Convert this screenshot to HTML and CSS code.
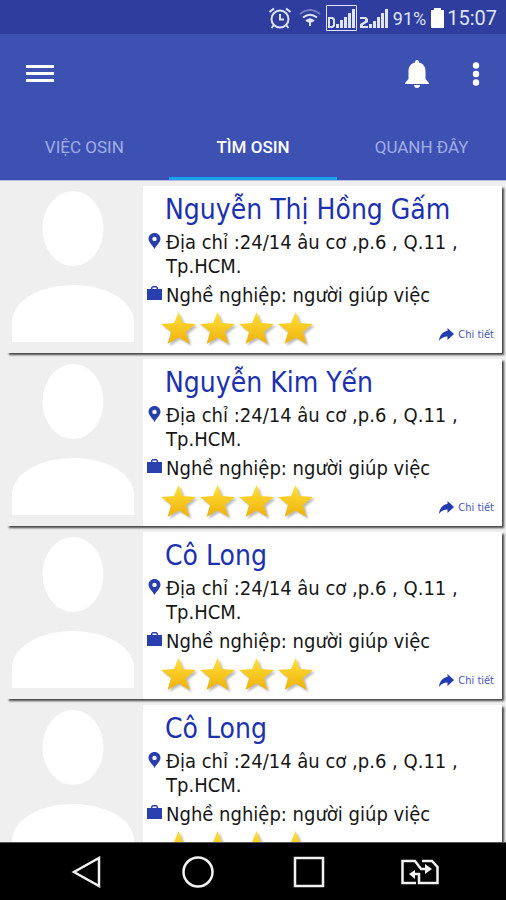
FILE: index.html
```html
<!DOCTYPE html>
<html lang="vi">
<head>
<meta charset="utf-8">
<meta name="viewport" content="width=device-width, initial-scale=1">
<title>Tìm Osin</title>
<link rel="stylesheet" href="styles.css">
</head>
<body>
<svg class="defs" aria-hidden="true">
  <defs>
    <linearGradient id="gold" x1="0" y1="0" x2="0" y2="1">
      <stop offset="0" stop-color="#ffe03a"/>
      <stop offset="1" stop-color="#efb10c"/>
    </linearGradient>
    <symbol id="avatar" viewBox="0 0 122 151">
      <ellipse cx="61" cy="37.500" rx="30.500" ry="37.500"/>
      <path d="M0 151V129C2 108 30 94 61 94S120 108 122 129V151Z"/>
    </symbol>
    <symbol id="pin" viewBox="0 0 12 16">
      <path fill-rule="evenodd" d="M6 0C2.600 0 0 2.600 0 5.800C0 9.500 4 12 6 16C8 12 12 9.500 12 5.800C12 2.600 9.400 0 6 0ZM6 3.700A2.200 2.200 0 1 1 6 8.100A2.200 2.200 0 1 1 6 3.700Z"/>
    </symbol>
    <symbol id="bag" viewBox="0 0 15 14">
      <path fill-rule="evenodd" d="M4 3V1.500L5.500 0H9.500L11 1.500V3H15V14H0V3ZM5.500 3H9.500V1.500H5.500Z"/>
    </symbol>
    <symbol id="star" viewBox="0 0 35 32">
      <path d="M17.500 0L22 11L35 12L25 20L28.500 32L17.500 25.500L6.500 32L10 20L0 12L13 11Z" fill="url(#gold)"/>
    </symbol>
    <symbol id="share" viewBox="0 0 15 13">
      <path d="M8.500 0L15 6L8.500 12V8.500C4.500 8.500 2 10 0 13C.500 7.500 3.500 3.500 8.500 3Z"/>
    </symbol>
  </defs>
</svg>

<div class="status">
  <svg width="24" height="24" viewBox="0 0 24 24" fill="none" stroke="currentColor" stroke-width="2">
    <circle cx="12" cy="13" r="8.500"/><path d="M12 8V13.500H16M1.500 6L6 2.500M22.500 6L18 2.500M5.500 19.500L3.500 22M18.500 19.500L20.500 22"/>
  </svg>
  <svg class="wifi" width="22" height="18" viewBox="0 0 22 18" fill="none" stroke="currentColor" stroke-width="2">
    <path class="faint" d="M1 5Q11-3 21 5"/><path d="M4 8.500Q11 3 18 8.500M7 12Q11 9 15 12"/><path d="M8.500 13L11 10.500L13.500 13M11 11V17"/>
  </svg>
  <svg width="31" height="26" viewBox="0 0 31 26" fill="currentColor">
    <path d="M.500.500H30.500V25.500H.500Z" fill="none" stroke="currentColor"/>
    <path fill-rule="evenodd" d="M2 12H7L9 14V21L7 23H2ZM4 14V21H6L7 20V15L6 14Z"/>
    <path d="M10 19H13V23H10ZM14 15H17V23H14ZM18 12H21V23H18ZM22 8H25V23H22ZM26 4H29V23H26Z"/>
  </svg>
  <svg width="29" height="26" viewBox="0 0 29 26" fill="currentColor">
    <path d="M0 12H6L8 14V17L3 20V21H8V23H0V19L5 16V14H0ZM9 19H12V23H9ZM13 16H16V23H13ZM17 12H20V23H17ZM21 8H24V23H21ZM25 4H28V23H25Z"/>
  </svg>
  <span class="percent">91%</span>
  <svg width="13" height="20" viewBox="0 0 13 20" fill="#fff"><path d="M3 0H10V2H13V20H0V2H3Z"/></svg>
  <span class="clock">15:07</span>
</div>

<header>
  <div class="toolbar">
    <button class="menu" aria-label="Menu"><svg width="30" height="20" viewBox="0 0 30 20"><path d="M1 1H29V4H1ZM1 8H29V11H1ZM1 15H29V18H1Z"/></svg></button>
    <button aria-label="Thông báo"><svg width="24" height="28" viewBox="0 0 24 28"><path d="M12 0C13.500 0 14 1 14 2.500C18.500 3.500 20.500 7 20.500 11V19L24 23V24H0V23L3.500 19V11C3.500 7 5.500 3.500 10 2.500C10 1 10.500 0 12 0ZM9 25H15C15 27 13.700 28 12 28S9 27 9 25Z"/></svg></button>
    <button aria-label="Thêm"><svg width="8" height="24" viewBox="0 0 8 24"><circle cx="4" cy="3.500" r="3.200"/><circle cx="4" cy="12" r="3.200"/><circle cx="4" cy="20.500" r="3.200"/></svg></button>
  </div>
  <nav class="tabs">
    <a href="#viec">VIỆC OSIN</a>
    <a href="#tim" class="active" aria-current="page">TÌM OSIN</a>
    <a href="#quanh">QUANH ĐÂY</a>
  </nav>
</header>

<main>
  <article class="card">
    <svg class="avatar"><use href="#avatar"/></svg>
    <div class="info">
      <h2>Nguyễn Thị Hồng Gấm</h2>
      <p><svg class="pin"><use href="#pin"/></svg><span>Địa chỉ :24/14 âu cơ ,p.6 , Q.11 , Tp.HCM.</span></p>
      <p><svg class="bag"><use href="#bag"/></svg><span>Nghề nghiệp: người giúp việc</span></p>
      <div class="foot">
        <svg class="star"><use href="#star"/></svg><svg class="star"><use href="#star"/></svg><svg class="star"><use href="#star"/></svg><svg class="star"><use href="#star"/></svg>
        <a href="#chitiet"><svg class="share"><use href="#share"/></svg>Chi tiết</a>
      </div>
    </div>
  </article>
  <article class="card">
    <svg class="avatar"><use href="#avatar"/></svg>
    <div class="info">
      <h2>Nguyễn Kim Yến</h2>
      <p><svg class="pin"><use href="#pin"/></svg><span>Địa chỉ :24/14 âu cơ ,p.6 , Q.11 , Tp.HCM.</span></p>
      <p><svg class="bag"><use href="#bag"/></svg><span>Nghề nghiệp: người giúp việc</span></p>
      <div class="foot">
        <svg class="star"><use href="#star"/></svg><svg class="star"><use href="#star"/></svg><svg class="star"><use href="#star"/></svg><svg class="star"><use href="#star"/></svg>
        <a href="#chitiet"><svg class="share"><use href="#share"/></svg>Chi tiết</a>
      </div>
    </div>
  </article>
  <article class="card">
    <svg class="avatar"><use href="#avatar"/></svg>
    <div class="info">
      <h2>Cô Long</h2>
      <p><svg class="pin"><use href="#pin"/></svg><span>Địa chỉ :24/14 âu cơ ,p.6 , Q.11 , Tp.HCM.</span></p>
      <p><svg class="bag"><use href="#bag"/></svg><span>Nghề nghiệp: người giúp việc</span></p>
      <div class="foot">
        <svg class="star"><use href="#star"/></svg><svg class="star"><use href="#star"/></svg><svg class="star"><use href="#star"/></svg><svg class="star"><use href="#star"/></svg>
        <a href="#chitiet"><svg class="share"><use href="#share"/></svg>Chi tiết</a>
      </div>
    </div>
  </article>
  <article class="card">
    <svg class="avatar"><use href="#avatar"/></svg>
    <div class="info">
      <h2>Cô Long</h2>
      <p><svg class="pin"><use href="#pin"/></svg><span>Địa chỉ :24/14 âu cơ ,p.6 , Q.11 , Tp.HCM.</span></p>
      <p><svg class="bag"><use href="#bag"/></svg><span>Nghề nghiệp: người giúp việc</span></p>
      <div class="foot">
        <svg class="star"><use href="#star"/></svg><svg class="star"><use href="#star"/></svg><svg class="star"><use href="#star"/></svg><svg class="star"><use href="#star"/></svg>
      </div>
    </div>
  </article>
</main>

<footer>
  <button aria-label="Quay lại"><svg width="32" height="32" viewBox="0 0 32 32"><path d="M28 2V30L3 16Z"/></svg></button>
  <button aria-label="Trang chủ"><svg width="32" height="32" viewBox="0 0 32 32"><circle cx="16" cy="16" r="14.500"/></svg></button>
  <button aria-label="Gần đây"><svg width="32" height="32" viewBox="0 0 32 32"><path d="M2 2H30V30H2Z"/></svg></button>
  <button aria-label="Đổi SIM"><svg width="38" height="26" viewBox="0 0 38 26"><path d="M15 24H1.500V2H14L20 10H27M21 2H31L36.500 8V24H18V15H12"/><path class="solid" d="M24 5L31 10L24 15ZM14 11L8 15L14 20Z"/></svg></button>
</footer>
</body>
</html>
```
FILE: styles.css
```css
* { box-sizing: border-box; }

body {
  margin: 0;
  height: 100vh;
  display: flex;
  flex-direction: column;
  overflow: hidden;
  background: #efefef;
  font-family: Roboto, sans-serif;
}

svg { display: block; flex: none; }
.defs { position: absolute; width: 0; height: 0; }
a { color: inherit; text-decoration: none; }
button { padding: 0; border: 0; background: none; color: inherit; }

.status {
  flex: none;
  height: 34px;
  padding: 2px 9px 0 0;
  display: flex;
  align-items: center;
  justify-content: flex-end;
  gap: 3px;
  background: #2e3d9e;
  color: #dfe4fb;
}
.wifi { margin: 0 2px 0 4px; }
.faint { opacity: 0.4; }
.percent { font-size: 18px; margin: 0 2px 0 1px; }
.clock { font-size: 20px; }

header {
  flex: none;
  background: #3d51b3;
  color: #fff;
  border-bottom: 1px solid #b4bbe6;
}
.toolbar {
  height: 80px;
  padding: 0 26px 0 25px;
  display: flex;
  align-items: center;
  gap: 43px;
}
.toolbar svg { fill: currentColor; }
.menu { margin-right: auto; }
.tabs {
  display: grid;
  grid-template-columns: repeat(3, 1fr);
  height: 66px;
}
.tabs a {
  display: flex;
  align-items: center;
  justify-content: center;
  padding-top: 2px;
  border-bottom: 3px solid transparent;
  font-size: 17px;
  color: #a0ade6;
}
.tabs .active { color: #fff; font-weight: 500; border-color: #16a4f2; }

main {
  flex: 1;
  min-height: 0;
  overflow: hidden;
  padding: 5px 4px 0 7px;
  font-family: "DejaVu Sans Condensed", "DejaVu Sans", sans-serif;
  font-stretch: condensed;
}
.card {
  display: flex;
  margin-bottom: 6px;
  background: #efefef;
  box-shadow: 2px 2px 2px #444;
}
.avatar {
  width: 122px;
  height: 151px;
  margin: 5px 9px 0 5px;
  fill: #fff;
}
.info {
  flex: 1;
  min-width: 0;
  padding: 6px 8px 6px 4px;
  background: #fff;
}
h2 {
  margin: 0 0 2px 18px;
  font-size: 28px;
  line-height: 36px;
  font-weight: 400;
  color: #1c31af;
}
p {
  margin: 0 0 5px;
  display: flex;
  align-items: flex-start;
  gap: 4px;
  font-size: 20px;
  line-height: 24px;
  color: #161616;
}
.pin, .bag { width: 15px; fill: #2a3fae; }
.pin { height: 16px; margin-top: 3px; }
.bag { height: 14px; margin-top: 3px; }
.foot {
  height: 35px;
  padding-left: 14px;
  display: flex;
  gap: 4px;
}
.star {
  width: 35px;
  height: 32px;
  filter: drop-shadow(2px 2px 1px #bbb);
}
.foot a {
  display: flex;
  align-items: center;
  gap: 4px;
  margin: 10px 0 0 auto;
  font-size: 11px;
  color: #4556b8;
}
.share { width: 15px; height: 13px; fill: #233bb0; }

footer {
  flex: none;
  height: 58px;
  padding: 0 31px;
  display: grid;
  grid-template-columns: repeat(4, 1fr);
  place-items: center;
  background: #000;
  border-top: 1px solid #555;
  color: #f2f2f2;
}
footer svg { fill: none; stroke: currentColor; stroke-width: 2.500; }
footer .solid { fill: currentColor; stroke: none; }
```
